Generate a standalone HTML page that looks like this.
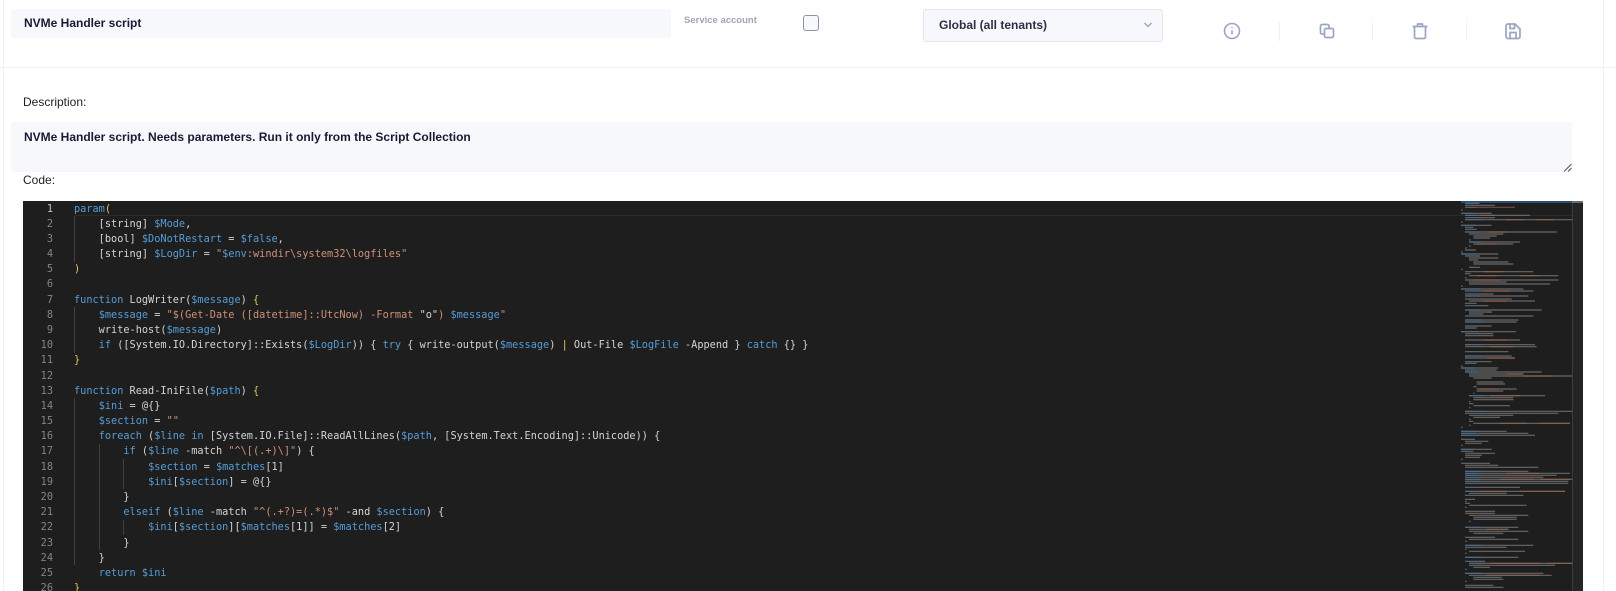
<!DOCTYPE html>
<html><head><meta charset="utf-8"><style>
html,body{margin:0;padding:0;background:#fff;width:1616px;height:591px;overflow:hidden}
body{position:relative;font-family:"Liberation Sans",sans-serif;color:#181c32}
.a{position:absolute}
.t{position:absolute;white-space:nowrap;line-height:16px}
.box{position:absolute;background:#f7f8fc;border-radius:3px}
#code{position:absolute;left:23px;top:201px;width:1560px;height:390px;background:#1e1e1e;overflow:hidden}
.l,.n{position:absolute;white-space:pre;font:10.25px/15.18px "DejaVu Sans Mono",monospace;height:15.18px;margin-top:.6px}
.l{left:51px;color:#d4d4d4}
.n{left:0;width:30px;text-align:right;color:#858585}
.k{color:#569cd6}.s{color:#ce9178}.g{color:#e6c65c}
.iv{position:absolute;width:1px;background:#404040}
.sep{position:absolute;top:22px;height:19px;width:1px;background:#eff2f5}
</style></head><body>
<div class="a" style="left:3px;top:0;width:1px;height:591px;background:#eff2f5"></div>
<div class="a" style="left:1603px;top:0;width:1px;height:591px;background:#eff2f5"></div>
<div class="a" style="left:0;top:67px;width:1616px;height:1px;background:#eff2f5"></div>

<div class="box" style="left:11px;top:9px;width:660px;height:29px"></div>
<div class="t" style="left:24px;top:15px;font-size:12px;font-weight:bold;color:#181c32">NVMe Handler script</div>
<div class="t" style="left:684px;top:13px;font-size:9.5px;font-weight:bold;color:#a1a5b7">Service account</div>
<div class="a" style="left:803px;top:15px;width:14px;height:14px;border:1px solid #8a93ab;border-radius:3px;background:#f7f8fa"></div>
<div class="a" style="left:923px;top:9px;width:238px;height:31px;background:#f7f8fc;border:1px solid #e4e6ef;border-radius:3px"></div>
<div class="t" style="left:939px;top:17px;font-size:12px;font-weight:bold;color:#2d2f45">Global (all tenants)</div>
<svg class="a" style="left:1143px;top:21px" width="10" height="8" viewBox="0 0 10 8"><path d="M1.5 2 5 5.5 8.5 2" fill="none" stroke="#a1a8c0" stroke-width="1.5"/></svg>

<svg class="a" style="left:1222px;top:21px" width="20" height="20" viewBox="0 0 20 20" fill="none" stroke="#9aa5c0" stroke-width="1.6"><circle cx="10" cy="10" r="7.5"/><path d="M10 9.2v4.2M10 6.2v1"/></svg>
<div class="sep" style="left:1279px"></div>
<svg class="a" style="left:1317px;top:21px" width="20" height="20" viewBox="0 0 20 20" fill="none" stroke="#9aa5c0" stroke-width="1.7" stroke-linejoin="round"><path d="M7 13H5.500A1.500 1.500 0 0 1 3.500 11.500V5A1.500 1.500 0 0 1 5 3.500H10.500A1.500 1.500 0 0 1 12 5V7"/><rect x="7.500" y="7.500" width="9" height="9" rx="1.500"/></svg>
<div class="sep" style="left:1372px"></div>
<svg class="a" style="left:1410px;top:21px" width="20" height="20" viewBox="0 0 20 20" fill="none" stroke="#9aa5c0" stroke-width="1.7" stroke-linejoin="round"><path d="M2.500 5.500H17.500M7.500 5.500V3H12.500V5.500M4.500 5.500V16A1.500 1.500 0 0 0 6 17.500H14A1.500 1.500 0 0 0 15.500 16V5.500"/></svg>
<div class="sep" style="left:1466px"></div>
<svg class="a" style="left:1503px;top:21px" width="20" height="20" viewBox="0 0 20 20" fill="none" stroke="#9aa5c0" stroke-width="1.7" stroke-linejoin="round"><path d="M5 3H12L17 8V15.500A2 2 0 0 1 15 17.500H5A2 2 0 0 1 3 15.500V5A2 2 0 0 1 5 3Z"/><path d="M7 3V7.500H11.500V3M7 17.500V11.500H13V17.500"/></svg>

<div class="t" style="left:23px;top:94px;font-size:12px;color:#222">Description:</div>
<div class="box" style="left:11px;top:122px;width:1561px;height:50px"></div>
<div class="t" style="left:24px;top:129px;font-size:12px;font-weight:bold;color:#181c32">NVMe Handler script. Needs parameters. Run it only from the Script Collection</div>
<svg class="a" style="left:1563px;top:163px" width="9" height="9" viewBox="0 0 9 9"><path d="M1 8.500 8.500 1M5 8.500 8.500 5" stroke="#555" stroke-width="1" fill="none"/></svg>
<div class="t" style="left:23px;top:172px;font-size:12px;color:#222">Code:</div>

<div id="code">
<div class="a" style="left:51px;top:0;width:1498px;height:14px;border-bottom:1px solid #2b2b2b"></div>
<div class="iv" style="left:51px;top:15px;height:46px"></div>
<div class="iv" style="left:51px;top:106px;height:46px"></div>
<div class="iv" style="left:51px;top:197px;height:167px"></div>
<div class="iv" style="left:76px;top:243px;height:106px"></div>
<div class="iv" style="left:100px;top:258px;height:30px"></div>
<div class="iv" style="left:100px;top:319px;height:15px"></div>

<div class="n" style="top:0;color:#c6c6c6">1</div><div class="n" style="top:15.18px">2</div><div class="n" style="top:30.36px">3</div><div class="n" style="top:45.54px">4</div><div class="n" style="top:60.72px">5</div><div class="n" style="top:75.9px">6</div><div class="n" style="top:91.08px">7</div><div class="n" style="top:106.26px">8</div><div class="n" style="top:121.44px">9</div><div class="n" style="top:136.62px">10</div><div class="n" style="top:151.8px">11</div><div class="n" style="top:166.98px">12</div><div class="n" style="top:182.16px">13</div><div class="n" style="top:197.34px">14</div><div class="n" style="top:212.52px">15</div><div class="n" style="top:227.7px">16</div><div class="n" style="top:242.88px">17</div><div class="n" style="top:258.06px">18</div><div class="n" style="top:273.24px">19</div><div class="n" style="top:288.42px">20</div><div class="n" style="top:303.6px">21</div><div class="n" style="top:318.78px">22</div><div class="n" style="top:333.96px">23</div><div class="n" style="top:349.14px">24</div><div class="n" style="top:364.32px">25</div><div class="n" style="top:379.5px">26</div>

<div class="l" style="top:0"><span class="k">param</span><span class="g">(</span></div>
<div class="l" style="top:15.18px">    [string] <span class="k">$Mode</span>,</div>
<div class="l" style="top:30.36px">    [bool] <span class="k">$DoNotRestart</span> = <span class="k">$false</span>,</div>
<div class="l" style="top:45.54px">    [string] <span class="k">$LogDir</span> = <span class="s">"</span><span class="k">$env</span><span class="s">:windir\system32\logfiles"</span></div>
<div class="l" style="top:60.72px"><span class="g">)</span></div>
<div class="l" style="top:91.08px"><span class="k">function</span> LogWriter(<span class="k">$message</span>) <span class="g">{</span></div>
<div class="l" style="top:106.26px">    <span class="k">$message</span> = <span class="s">"$(Get-Date ([datetime]::UtcNow) -Format </span>"o"<span class="s">)</span> <span class="k">$message</span><span class="s">"</span></div>
<div class="l" style="top:121.44px">    write-host(<span class="k">$message</span>)</div>
<div class="l" style="top:136.62px">    <span class="k">if</span> ([System.IO.Directory]::Exists(<span class="k">$LogDir</span>)) { <span class="k">try</span> { write-output(<span class="k">$message</span>) <span class="g">|</span> Out-File <span class="k">$LogFile</span> -Append } <span class="k">catch</span> {} }</div>
<div class="l" style="top:151.8px"><span class="g">}</span></div>
<div class="l" style="top:182.16px"><span class="k">function</span> Read-IniFile(<span class="k">$path</span>) <span class="g">{</span></div>
<div class="l" style="top:197.34px">    <span class="k">$ini</span> = @{}</div>
<div class="l" style="top:212.52px">    <span class="k">$section</span> = <span class="s">""</span></div>
<div class="l" style="top:227.7px">    <span class="k">foreach</span> (<span class="k">$line</span> <span class="k">in</span> [System.IO.File]::ReadAllLines(<span class="k">$path</span>, [System.Text.Encoding]::Unicode)) {</div>
<div class="l" style="top:242.88px">        <span class="k">if</span> (<span class="k">$line</span> -match <span class="s">"^\[(.+)\]"</span>) {</div>
<div class="l" style="top:258.06px">            <span class="k">$section</span> = <span class="k">$matches</span>[1]</div>
<div class="l" style="top:273.24px">            <span class="k">$ini</span>[<span class="k">$section</span>] = @{}</div>
<div class="l" style="top:288.42px">        }</div>
<div class="l" style="top:303.6px">        <span class="k">elseif</span> (<span class="k">$line</span> -match <span class="s">"^(.+?)=(.*)$"</span> -and <span class="k">$section</span>) {</div>
<div class="l" style="top:318.78px">            <span class="k">$ini</span>[<span class="k">$section</span>][<span class="k">$matches</span>[1]] = <span class="k">$matches</span>[2]</div>
<div class="l" style="top:333.96px">        }</div>
<div class="l" style="top:349.14px">    }</div>
<div class="l" style="top:364.32px">    <span class="k">return</span> <span class="k">$ini</span></div>
<div class="l" style="top:379.5px"><span class="g">}</span></div>
</div>

<div class="a" style="left:1572px;top:201px;width:11px;height:390px;background:#242424;border-left:1px solid #3c3c3c;box-sizing:border-box"></div>
<div class="a" style="left:1572px;top:201px;width:11px;height:2px;background:#6a6a6a"></div>
<div class="a" style="left:1461px;top:201px;width:111px;height:2px;background:#264f78"></div>

<svg class="a" style="left:1440px;top:190px" width="176" height="401" viewBox="0 0 528 1203" fill="none" stroke-width="3.600">
<defs><filter id="bl" x="-5%" y="-5%" width="110%" height="110%"><feGaussianBlur stdDeviation="1"/></filter></defs>
<g filter="url(#bl)">
<path stroke="#9a9a9a" stroke-opacity=".6" d="M75 40H118M75 46H165M75 52H110M63 60H68M63 70H155M75 76H270M75 83H165M75 89H397M63 96H68M63 106H155M75 112H100M75 118H110M75 126H350M87 132H190M100 138H170M100 144H150M87 150H92M87 156H240M100 162H220M87 168H92M75 174H80M75 180H108M63 186H68M63 192H175M75 198H120M87 204H175M87 210H115M100 216H205M100 222H220M87 232H120M63 238H68M75 245H280M75 251H92M87 257H355M75 263H80M75 270H355M87 276H200M87 282H330M63 288H68M63 297H250M75 303H280M75 312H160M75 318H265M75 327H215M87 333H285M75 340H110M75 347H145M75 360H305M87 366H155M87 372H130M75 378H280M75 390H235M75 396H230M75 408H155M75 414H110M63 425H228M75 431H160M75 437H160M75 450H240M75 464H285M75 470H290M75 485H205M75 498H215M75 504H225M75 515H155M75 520H110M63 528H68M63 534H175M75 540H170M75 546H305M87 552H250M87 558H397M100 564H155M110 576H190M110 582H195M100 590H110M110 597H230M110 603H190M100 610H104M87 617H315M100 623H220M100 629H220M87 635H92M87 641H100M100 647H210M87 653H92M75 664H397M75 670H355M87 676H220M100 682H180M87 688H92M87 694H100M100 700H390M87 706H92M63 712H68M63 724H200M63 730H265M63 736H285M63 748H105M75 754H145M75 760H125M63 766H68M63 778H155M63 784H100M75 790H165M75 796H125M75 802H120M63 808H68M63 820H150M75 826H175M75 832H295M75 844H265M75 850H390M75 856H350M75 862H310M75 868H397M75 874H385M75 880H385M75 892H240M75 904H375M87 910H200M75 916H250M75 928H105M75 934H80M75 940H90M87 946H260M75 952H80M75 964H165M75 970H165M87 976H265M100 982H230M100 988H230M87 994H92M75 1012H235M87 1018H205M87 1024H265M100 1030H190M75 1042H165M87 1048H235M75 1054H80M75 1066H280M75 1072H200M75 1078H80M87 1084H255M75 1090H80M75 1102H235M75 1114H135M87 1120H397M87 1126H345M100 1132H150M75 1138H80M75 1150H310M87 1156H335M100 1162H185M100 1168H190M75 1174H80M75 1186H160M75 1192H190"/>
<path stroke="#3f76a8" stroke-opacity=".6" d="M75 40H100M63 70H95M75 76H105M75 89H130M63 106H110M75 126H115M87 156H125M63 192H110M63 297H120M75 318H120M75 360H120M75 390H125M75 396H130M63 425H115M75 464H125M75 498H125M63 534H105M75 546H115M87 617H140M75 664H140M63 724H115M63 730H110M63 736H115M63 778H105M75 844H125M75 850H115M75 856H125M75 868H120M75 874H120M75 904H125M75 1012H120M75 1066H125M75 1102H125M87 1120H140M75 1150H125"/>
<path stroke="#a8644a" stroke-opacity=".65" d="M110 52H225M120 76H165M200 89H250M290 89H340M140 126H200M110 162H170M130 245H190M110 257H170M240 257H300M100 270H180M130 303H210M130 333H200M140 366H155M130 450H200M150 470H220M140 504H225M200 552H250M250 558H340M120 597H170M150 617H240M180 700H260M300 700H390M200 850H300M180 868H280M300 868H390M120 904H200M240 904H375M140 1018H205M150 1120H300M320 1120H397M140 1156H300"/>
</g>
</svg>
</body></html>
